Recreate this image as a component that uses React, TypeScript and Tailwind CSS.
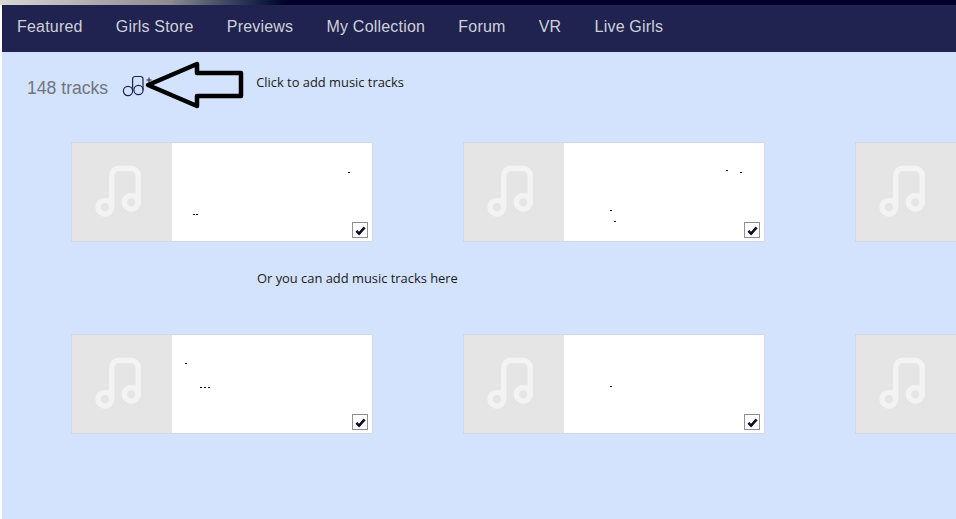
import React from 'react';

const navItems = ['Featured', 'Girls Store', 'Previews', 'My Collection', 'Forum', 'VR', 'Live Girls'];

const MusicGlyph = () => (
  <svg viewBox="0 0 101 100" className="w-full h-full" fill="none" stroke="#f3f3f3" strokeWidth="5.5">
    <circle cx="33" cy="65.5" r="7" />
    <circle cx="60" cy="60.5" r="7" />
    <path d="M40 65V33a7 7 0 0 1 7-7h13a7 7 0 0 1 7 7v27" strokeLinecap="round" />
  </svg>
);

const Checkbox = () => (
  <div className="w-[16px] h-[16px] border border-[#8f8f8f] bg-white flex items-center justify-center">
    <svg viewBox="0 0 12 12" className="w-[11px] h-[11px]" fill="none" stroke="#0b0b2a" strokeWidth="2.8">
      <path d="M1.5 6.5 4.5 9.5 10.5 2.5" />
    </svg>
  </div>
);

const dotSets: [number, number][][] = [
  [[176, 29], [21, 71], [24, 71]],
  [[162, 27], [176, 29], [46, 67], [50, 78]],
  [[13, 28], [28, 52], [32, 52], [36, 52]],
  [[46, 51]],
];

const TrackCard = ({ dots = [], full = true }: { dots?: [number, number][]; full?: boolean }) => (
  <div className={`flex h-[100px] shrink-0 border border-[#cdd8ea] ${full ? 'w-[302px]' : 'w-[101px]'}`}>
    <div className="w-[100px] shrink-0 bg-[#e5e5e5]">
      <MusicGlyph />
    </div>
    {full && (
      <div className="relative flex-1 bg-white flex items-end justify-end pr-[4px] pb-[3px]">
        {dots.map(([x, y]) => (
          <span key={`${x}-${y}`} className="absolute w-[2px] h-[1px] bg-black" style={{ left: x, top: y }} />
        ))}
        <Checkbox />
      </div>
    )}
  </div>
);

const CardRow = ({ first, second }: { first: [number, number][]; second: [number, number][] }) => (
  <div className="flex gap-[90px] pl-[69px]">
    <TrackCard dots={first} />
    <TrackCard dots={second} />
    <TrackCard full={false} />
  </div>
);

export default function App() {
  return (
    <div className="relative w-[956px] h-[519px] overflow-hidden bg-white flex flex-col font-['Liberation_Sans',sans-serif]">
      <div className="h-[5px] shrink-0 bg-gradient-to-r from-[#d8d8d8] via-[#8a8a90] via-[18%] to-[#02022c] to-[30%]" />
      <div className="flex-1 flex flex-col ml-[2px] bg-[#d3e2fd]">
        <nav className="h-[47px] shrink-0 flex items-center gap-[33.2px] pl-[15px] pb-[4px] bg-[#20224f] text-[16px] text-[#cfd1da] tracking-[0.2px]">
          {navItems.map((item) => (
            <span key={item}>{item}</span>
          ))}
        </nav>

        <div className="h-[90px] shrink-0 flex items-start">
          <span className="ml-[25px] mt-[25px] text-[17.6px] leading-[22px] text-[#6f7680]">148 tracks</span>
          <svg viewBox="0 0 30 26" className="ml-[14px] mt-[23px] w-[30px] h-[26px]" fill="none" stroke="#20224f" strokeWidth="1.2">
            <circle cx="6" cy="16" r="4.6" />
            <circle cx="16.5" cy="15" r="4.6" />
            <path d="M10.6 16V4a2.5 2.5 0 0 1 2.5-2.5h5.4a2.5 2.5 0 0 1 2.5 2.5v11" />
            <path d="M24.5 5h5M27 2.5v5" strokeWidth="1" />
          </svg>
          <svg viewBox="0 0 104 48" className="ml-[-9px] mt-[9px] w-[104px] h-[48px]" fill="none" stroke="#000" strokeWidth="4.5" strokeLinejoin="round">
            <path d="M5 24 54 3V12H98V35H54V45Z" />
          </svg>
          <span className="ml-[9px] mt-[21px] text-[12.9px] leading-[18px] text-[#1a1a1a] font-['Open_Sans',sans-serif]">
            Click to add music tracks
          </span>
        </div>

        <CardRow first={dotSets[0]} second={dotSets[1]} />

        <div className="h-[92px] shrink-0 pl-[255px] pt-[26px] text-[12.9px] leading-[20px] text-[#1a1a1a] font-['Open_Sans',sans-serif]">
          Or you can add music tracks here
        </div>

        <CardRow first={dotSets[2]} second={dotSets[3]} />
      </div>
    </div>
  );
}
